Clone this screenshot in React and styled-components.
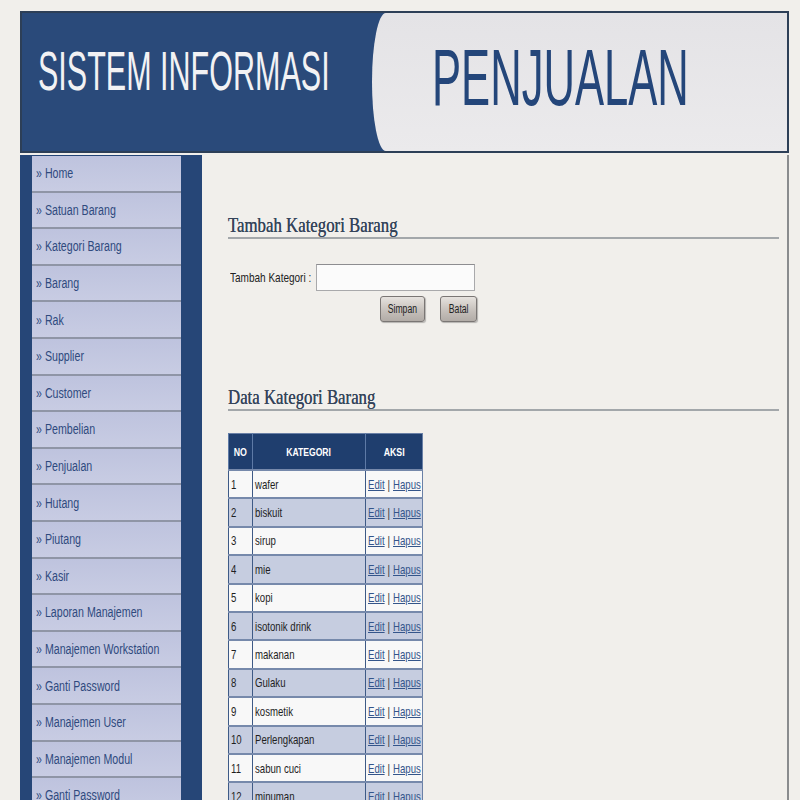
import React from "react";
import styled, { createGlobalStyle } from "styled-components";

const GlobalStyle = createGlobalStyle`
  html, body {
    margin: 0;
    padding: 0;
    overflow: hidden;
    background: #f1efeb;
    font-family: "Liberation Sans", Arial, sans-serif;
  }
`;

// the screenshot's text is a narrow face; Liberation Sans squeezed is the closest we have
const Cond = styled.span`
  display: inline-block;
  white-space: nowrap;
  transform: scaleX(${(p) => p.sx || 0.8});
  transform-origin: ${(p) => p.origin || "left"} center;
`;

const Page = styled.div`
  width: 769px;
  height: 789px;
  margin: 11px 0 0 20px;
  overflow: hidden;
`;

const Header = styled.header`
  display: flex;
  height: 142px;
  box-sizing: border-box;
  border: 2px solid #2d3f57;
  background: #2a4a7a;
  overflow: hidden;
`;

const BrandLeft = styled.div`
  width: 350px;
  flex-shrink: 0;
  padding: 30px 0 0 16px;
  box-sizing: border-box;
`;

const BrandRight = styled.div`
  flex: 1;
  background: linear-gradient(to bottom, #e4e3e6, #ebeaec);
  border-top-left-radius: 14px 70px;
  border-bottom-left-radius: 14px 70px;
  padding: 25px 0 0 60px;
  box-sizing: border-box;
  overflow: hidden;
`;

const BrandText = styled.span`
  display: inline-block;
  white-space: nowrap;
  font-family: "Liberation Sans", Arial, sans-serif;
  font-size: ${(p) => p.size}px;
  line-height: 1;
  color: ${(p) => p.color};
  transform: scaleX(0.545);
  transform-origin: left center;
`;

const Body = styled.div`
  display: flex;
  margin-top: 2px;
  height: 700px;
`;

const Sidebar = styled.nav`
  width: 182px;
  flex-shrink: 0;
  background: #264677;
  padding: 1px 21px 0 12px;
  box-sizing: border-box;
`;

const MenuItem = styled.a`
  display: flex;
  align-items: center;
  height: 34.6px;
  padding-left: 4px;
  border-bottom: 2px solid #8f95a6;
  background: linear-gradient(to bottom, #bec3de, #c8cce3);
  font-size: 14px;
  color: #2f4a7e;
  text-decoration: none;
  overflow: hidden;
`;

const Content = styled.main`
  flex: 1;
  padding: 58px 8px 0 26px;
  border-right: 2px solid #8a8c8e;
  background: #f1efeb;
`;

const SectionTitle = styled.h2`
  margin: ${(p) => p.top}px 0 0;
  height: 24px;
  line-height: 24px;
  border-bottom: 2px solid #a3a7aa;
  font-family: "Liberation Serif", "Times New Roman", serif;
  font-weight: normal;
  font-size: 21px;
  color: #35445a;
`;

const TitleText = styled(Cond)`
  text-shadow: 0 0 0.6px #35445a;
`;

const Form = styled.form`
  width: 249px;
  margin-top: 25px;
`;

const FormRow = styled.div`
  display: flex;
  align-items: center;
`;

const Label = styled.label`
  width: 88px;
  flex-shrink: 0;
  padding-left: 2px;
  box-sizing: border-box;
  font-size: 13px;
  color: #222;
`;

const Input = styled.input`
  width: 159px;
  height: 27px;
  box-sizing: border-box;
  border: 1px solid #a9a9ab;
  border-top-color: #8d8d90;
  background: #fbfbfb;
`;

const Actions = styled.div`
  display: flex;
  justify-content: flex-end;
  gap: 15px;
  margin-top: 5px;
`;

const Button = styled.button`
  width: ${(p) => p.w}px;
  height: 26px;
  padding: 0;
  border: 1px solid #7a7674;
  border-radius: 3px;
  background: linear-gradient(to bottom, #e6e2de, #c4beb9 60%, #b2aca7);
  box-shadow: 1px 1px 1px rgba(0, 0, 0, 0.25);
  font-family: "Liberation Sans", Arial, sans-serif;
  font-size: 12px;
  color: #222;
  overflow: hidden;
`;

const Table = styled.table`
  width: 195px;
  margin-top: 22px;
  table-layout: fixed;
  border-collapse: collapse;
  border: 1px solid #6a80a6;
  font-size: 13px;
  color: #1f1f1f;
`;

const Th = styled.th`
  width: ${(p) => p.w}px;
  height: 35px;
  padding: 0;
  background: #1f3e6e;
  border-left: 1px solid #5e7aa6;
  color: #fff;
  font-size: 11px;
  font-weight: bold;
  text-align: center;
  overflow: hidden;
`;

const Row = styled.tr`
  background: ${(p) => (p.alt ? "#c6cde0" : "#f8f8f8")};
`;

const Td = styled.td`
  height: 26.4px;
  padding: 0 0 0 2px;
  border-top: 2px solid #7689ab;
  border-left: 1px solid #3e5a86;
  white-space: nowrap;
  overflow: hidden;
`;

const Link = styled.a`
  color: #34558a;
  text-decoration: underline;
`;

const Sep = styled.span`
  margin: 0 4px;
  color: #333;
`;

const menu = [
  "Home",
  "Satuan Barang",
  "Kategori Barang",
  "Barang",
  "Rak",
  "Supplier",
  "Customer",
  "Pembelian",
  "Penjualan",
  "Hutang",
  "Piutang",
  "Kasir",
  "Laporan Manajemen",
  "Manajemen Workstation",
  "Ganti Password",
  "Manajemen User",
  "Manajemen Modul",
  "Ganti Password",
];

const categories = [
  "wafer",
  "biskuit",
  "sirup",
  "mie",
  "kopi",
  "isotonik drink",
  "makanan",
  "Gulaku",
  "kosmetik",
  "Perlengkapan",
  "sabun cuci",
  "minuman",
];

export default function App() {
  return (
    <>
      <GlobalStyle />
      <Page>
        <Header>
          <BrandLeft>
            <BrandText size={56} color="#f2f2f4">SISTEM INFORMASI</BrandText>
          </BrandLeft>
          <BrandRight>
            <BrandText size={80} color="#24467a">PENJUALAN</BrandText>
          </BrandRight>
        </Header>
        <Body>
          <Sidebar>
            {menu.map((item, i) => (
              <MenuItem key={i} href="#">
                <Cond sx={0.76}>» {item}</Cond>
              </MenuItem>
            ))}
          </Sidebar>
          <Content>
            <SectionTitle top={0}>
              <TitleText>Tambah Kategori Barang</TitleText>
            </SectionTitle>
            <Form onSubmit={(e) => e.preventDefault()}>
              <FormRow>
                <Label htmlFor="kategori">
                  <Cond sx={0.77}>Tambah Kategori :</Cond>
                </Label>
                <Input id="kategori" type="text" />
              </FormRow>
              <Actions>
                <Button w={45} type="submit">
                  <Cond sx={0.72} origin="center">Simpan</Cond>
                </Button>
                <Button w={37} type="button">
                  <Cond sx={0.72} origin="center">Batal</Cond>
                </Button>
              </Actions>
            </Form>
            <SectionTitle top={63}>
              <TitleText>Data Kategori Barang</TitleText>
            </SectionTitle>
            <Table>
              <thead>
                <tr>
                  <Th w={23}><Cond sx={0.8} origin="center">NO</Cond></Th>
                  <Th w={112}><Cond sx={0.78} origin="center">KATEGORI</Cond></Th>
                  <Th w={56}><Cond sx={0.8} origin="center">AKSI</Cond></Th>
                </tr>
              </thead>
              <tbody>
                {categories.map((name, i) => (
                  <Row key={i} alt={i % 2 === 1}>
                    <Td><Cond sx={0.74}>{i + 1}</Cond></Td>
                    <Td><Cond sx={0.74}>{name}</Cond></Td>
                    <Td>
                      <Cond sx={0.74}>
                        <Link href="#">Edit</Link>
                        <Sep>|</Sep>
                        <Link href="#">Hapus</Link>
                      </Cond>
                    </Td>
                  </Row>
                ))}
              </tbody>
            </Table>
          </Content>
        </Body>
      </Page>
    </>
  );
}
